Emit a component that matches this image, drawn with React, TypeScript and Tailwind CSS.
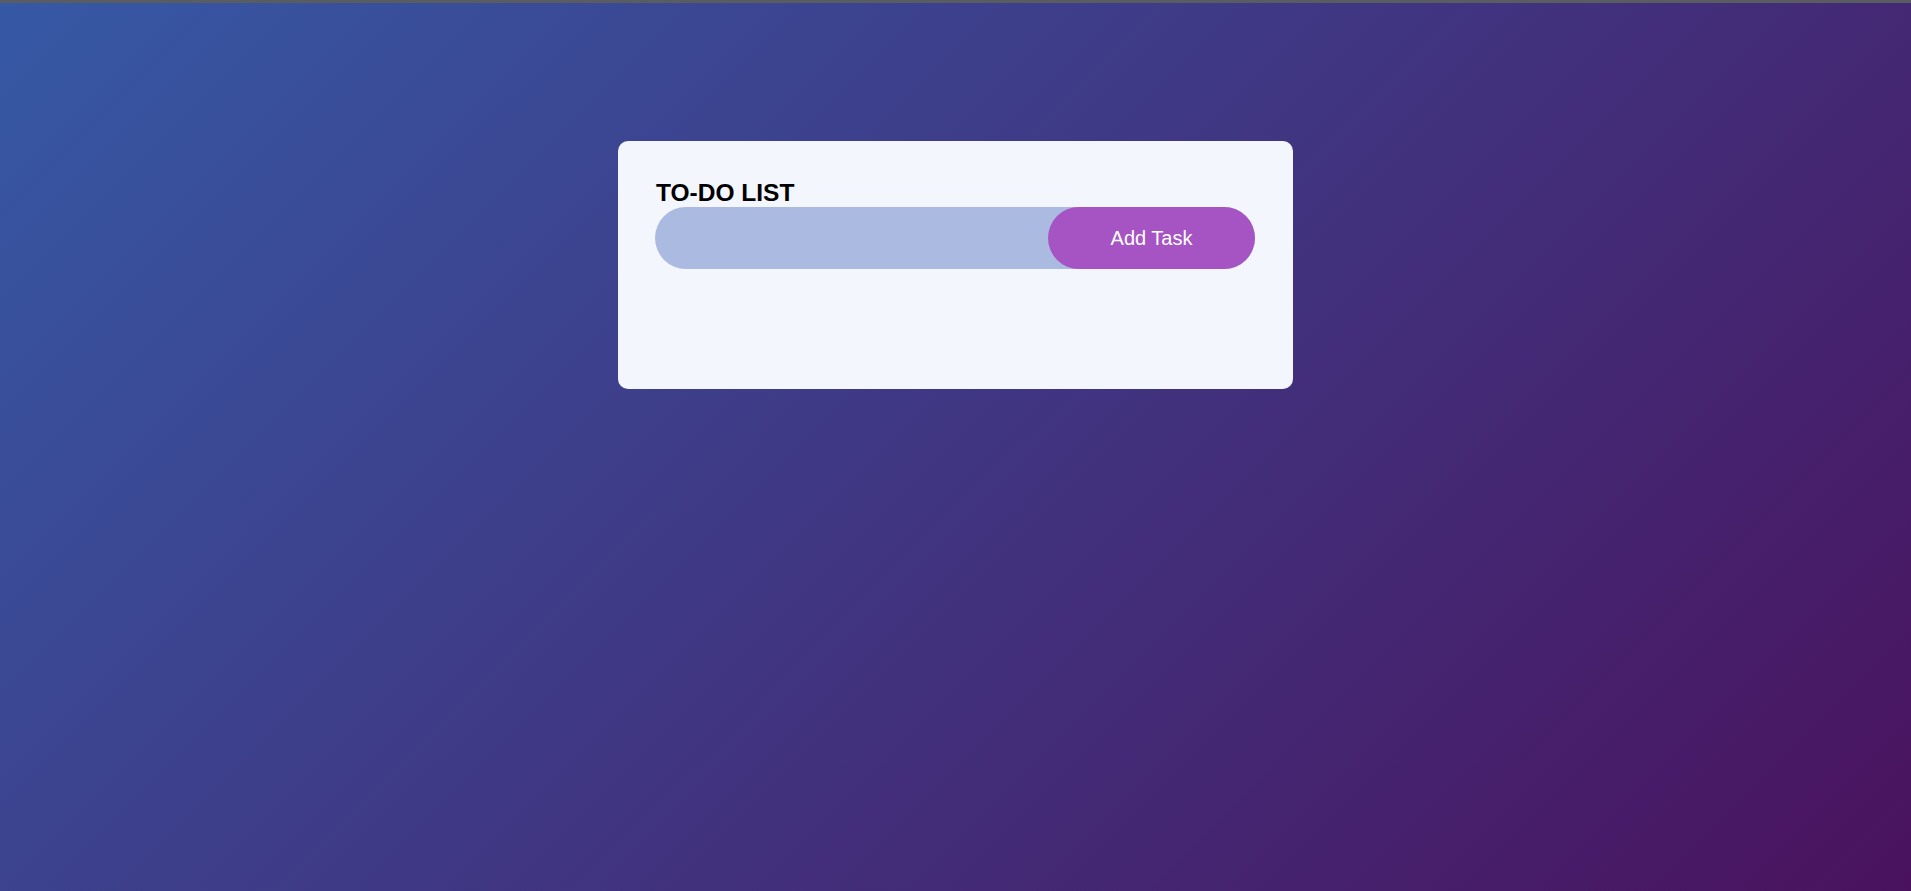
import React, { FC, useState } from "react";

const App: FC = () => {
  const [task, setTask] = useState<string>("");
  const [tasks, setTasks] = useState<string[]>([]);

  const addTask = () => {
    if (task.trim() === "") return;
    setTasks([...tasks, task.trim()]);
    setTask("");
  };

  return (
    <div className="min-h-screen w-full bg-[linear-gradient(135deg,#3659a5,#4a125e)] font-['Liberation_Sans',Arial,sans-serif]">
      <div className="h-[3px] w-full bg-[#595d62]" />
      <div className="flex justify-center pt-[138px]">
        <div className="w-[675px] rounded-[10px] bg-[#f3f7fd] pl-[37px] pr-[38px] pt-[38px] pb-[120px]">
          <h2 className="pl-px text-[24.5px] font-bold leading-[28px] text-black">TO-DO LIST</h2>
          <div className="flex h-[62px] items-center rounded-full bg-[#abbae0]">
            <input
              type="text"
              value={task}
              onChange={(e) => setTask(e.target.value)}
              className="h-full flex-1 bg-transparent pl-5 text-base outline-none"
            />
            <button
              onClick={addTask}
              className="h-full w-[207px] rounded-full bg-[#a653c4] text-[20px] text-white"
            >
              Add Task
            </button>
          </div>
          <ul>
            {tasks.map((t, i) => (
              <li key={i} className="py-3 text-[17px]">
                {t}
              </li>
            ))}
          </ul>
        </div>
      </div>
    </div>
  );
};

export default App;
